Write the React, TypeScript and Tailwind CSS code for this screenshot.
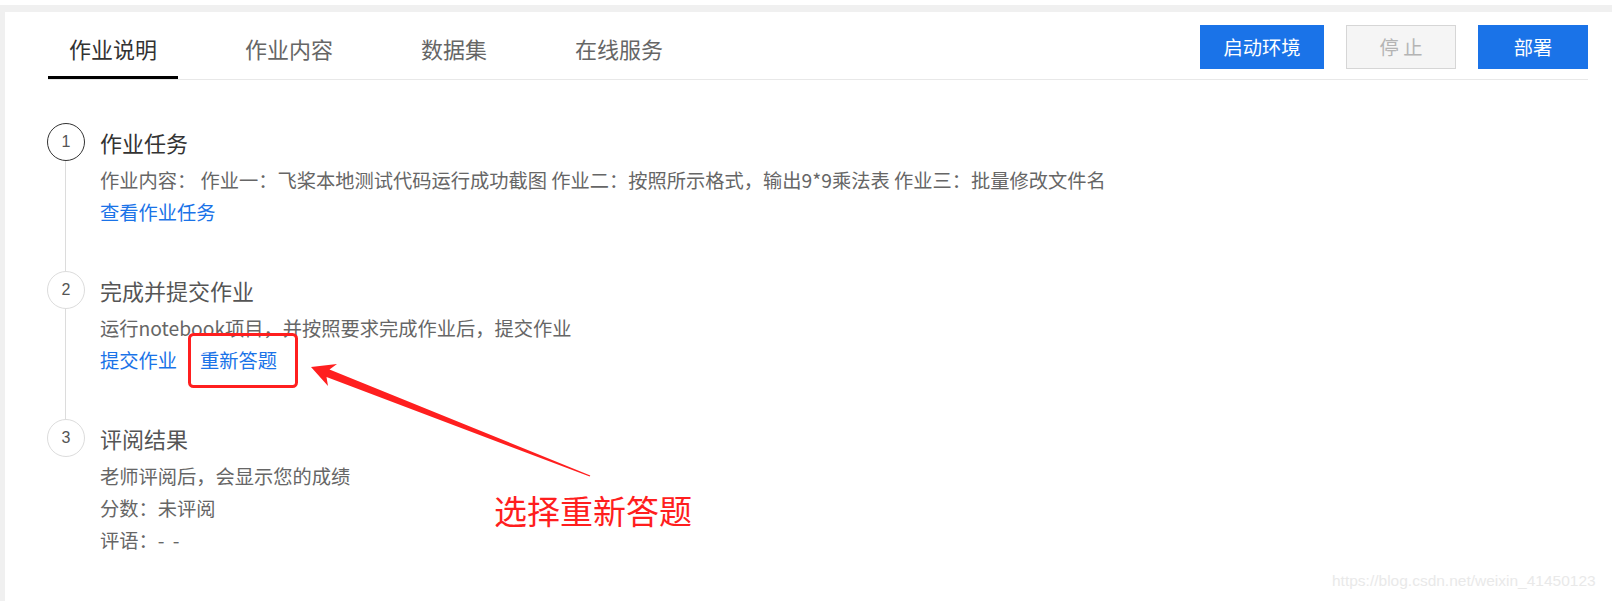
import React from "react";

const FONT = "font-['Noto_Sans_CJK_SC','Noto_Sans',sans-serif]";

type StepProps = {
  n: number;
  title: string;
  active?: boolean;
  last?: boolean;
  children: React.ReactNode;
};

function Step({ n, title, active, last, children }: StepProps) {
  return (
    <div className="flex">
      <div className="flex flex-col w-[38px] shrink-0">
        <div
          className={
            "w-[38px] h-[38px] rounded-full border flex items-center justify-center text-[16px] leading-none text-[#555] font-['Liberation_Sans',sans-serif] " +
            (active ? "border-[#333]" : "border-[#dcdcdc]")
          }
        >
          {n}
        </div>
        {!last && <div className="w-px flex-1 bg-[#dcdcdc] ml-[18px]" />}
      </div>
      <div className={"ml-[15px] " + (last ? "" : "pb-[43px]")}>
        <div
          className={
            "text-[22px] leading-[38px] h-[38px] " +
            (active ? "text-[#333]" : "text-[#555]")
          }
        >
          {title}
        </div>
        <div className="mt-[3px] text-[19.25px] leading-[32px] text-[#666]">
          {children}
        </div>
      </div>
    </div>
  );
}

export default function App() {
  const tabs = ["作业说明", "作业内容", "数据集", "在线服务"];
  return (
    <div className={"relative w-[1612px] h-[601px] bg-[#f0f0f0] overflow-hidden " + FONT}>
      <div className="h-[5px] bg-white" />
      <div className="mt-[7px] ml-[5px] h-[589px] bg-white pl-[43px] pr-[24px]">
        {/* tab bar */}
        <div className="flex h-[68px] border-b border-[#e8e8e8]">
          <div className="flex gap-[46px] h-full">
            {tabs.map((t, i) => (
              <div
                key={t}
                className={
                  "h-full px-[21px] pt-[7px] flex items-center text-[22px] leading-[30px] border-b-[3px] -mb-px " +
                  (i === 0 ? "border-black text-[#333]" : "border-transparent text-[#666]")
                }
              >
                {t}
              </div>
            ))}
          </div>
          <div className="ml-auto flex gap-[22px] mt-[13px] h-[44px]">
            <div className="w-[124px] h-[44px] bg-[#1a73e8] text-white text-[19.25px] flex items-center justify-center">
              启动环境
            </div>
            <div className="w-[110px] h-[44px] bg-[#f5f5f5] border border-[#d6d6d6] text-[#b4b4b4] text-[19.25px] flex items-center justify-center">
              停 止
            </div>
            <div className="w-[110px] h-[44px] bg-[#1a73e8] text-white text-[19.25px] flex items-center justify-center">
              部署
            </div>
          </div>
        </div>

        {/* steps */}
        <div className="mt-[43px] -ml-px">
          <Step n={1} title="作业任务" active>
            <div>
              作业内容： 作业一：飞桨本地测试代码运行成功截图 作业二：按照所示格式，输出9*9乘法表 作业三：批量修改文件名
            </div>
            <div className="text-[#1a73e8]">查看作业任务</div>
          </Step>
          <Step n={2} title="完成并提交作业">
            <div>运行notebook项目，并按照要求完成作业后，提交作业</div>
            <div className="flex gap-[23px] text-[#1a73e8]">
              <span>提交作业</span>
              <span>重新答题</span>
            </div>
          </Step>
          <Step n={3} title="评阅结果" last>
            <div>老师评阅后，会显示您的成绩</div>
            <div>分数：未评阅</div>
            <div>
              评语：<span className="tracking-[2px]">- -</span>
            </div>
          </Step>
        </div>
      </div>

      {/* annotation overlay */}
      <svg
        className="absolute left-0 top-0 pointer-events-none"
        width="1612"
        height="601"
        viewBox="0 0 1612 601"
      >
        <rect
          x="189.5"
          y="334.5"
          width="107"
          height="52"
          rx="4"
          fill="none"
          stroke="#ff1f1f"
          strokeWidth="3"
        />
        <polygon
          points="311,367 337,364 329.5,369.5 590.3,475.4 589.7,476.6 326.5,377 328,386"
          fill="#ff1f1f"
        />
      </svg>
      <div className="absolute left-[494px] top-[494px] text-[33px] leading-[33px] text-[#ff1e1e] whitespace-nowrap">
        选择重新答题
      </div>
      <div className="absolute left-[1332px] top-[572px] text-[15.5px] leading-[18px] text-[#e9e9e9] font-['Liberation_Sans',sans-serif] whitespace-nowrap">
        https://blog.csdn.net/weixin_41450123
      </div>
    </div>
  );
}
